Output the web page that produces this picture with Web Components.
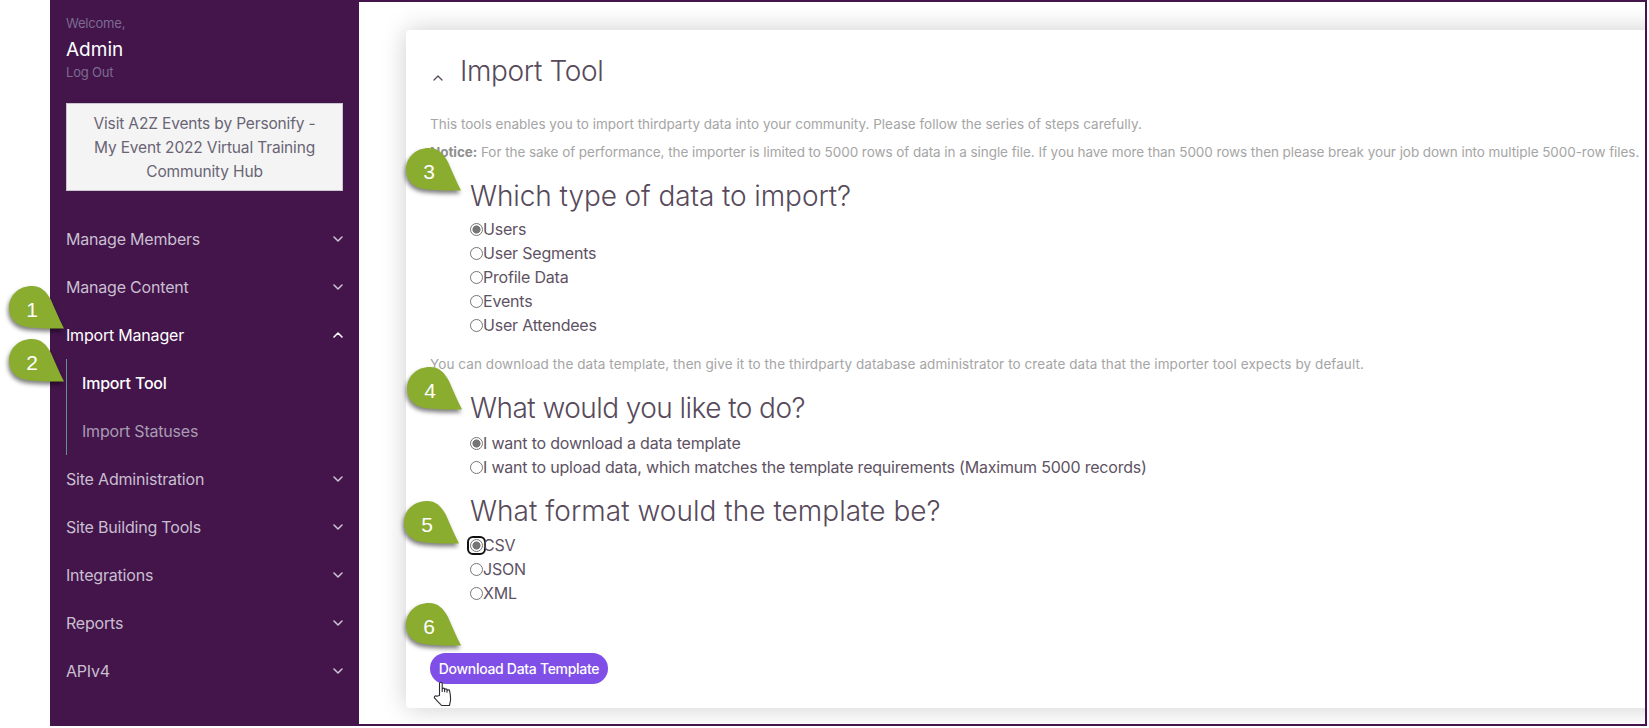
<!DOCTYPE html>
<html lang="en">
<head>
<meta charset="utf-8">
<title>Import Tool</title>
<style>
  html, body { margin: 0; background: #fff; }
  body { font-family: Inter, "Open Sans", sans-serif; position: relative; height: 728px; overflow: hidden; }
</style>
</head>
<body>
<admin-shell>
  <side-nav slot="nav">
    <nav-item label="Manage Members"></nav-item>
    <nav-item label="Manage Content"></nav-item>
    <nav-item label="Import Manager" open>
      <nav-sub active>Import Tool</nav-sub>
      <nav-sub>Import Statuses</nav-sub>
    </nav-item>
    <nav-item label="Site Administration"></nav-item>
    <nav-item label="Site Building Tools"></nav-item>
    <nav-item label="Integrations"></nav-item>
    <nav-item label="Reports"></nav-item>
    <nav-item label="APIv4"></nav-item>
  </side-nav>
  <import-tool slot="main"></import-tool>
</admin-shell>

<call-out n="1" x="8" y="286"></call-out>
<call-out n="2" x="8" y="339"></call-out>
<call-out n="3" x="405" y="148"></call-out>
<call-out n="4" x="406" y="367"></call-out>
<call-out n="5" x="403" y="501"></call-out>
<call-out n="6" x="405" y="603"></call-out>
<hand-cursor x="433" y="681"></hand-cursor>

<script>
const chevron = (up, weight = 1.6) => `<svg width="12" height="8" viewBox="0 0 12 8" fill="none" stroke="currentColor" stroke-width="${weight}" stroke-linecap="round" stroke-linejoin="round"><path d="${up ? 'M2 6l4-4 4 4' : 'M2 2l4 4 4-4'}"/></svg>`;

class AdminShell extends HTMLElement {
  constructor() {
    super();
    this.attachShadow({ mode: 'open' }).innerHTML = `
      <style>
        :host { display: flex; height: 726px; margin: 0 2px 0 50px; }
        .nav { flex: 0 0 309px; display: flex; }
        .main {
          flex: 1;
          min-width: 0;
          border: 2px solid #43154b;
          border-left: 0;
          overflow: hidden;
          padding: 28px 0 16px 47px;
          background: #fff;
        }
      </style>
      <div class="nav"><slot name="nav"></slot></div>
      <div class="main"><slot name="main"></slot></div>`;
  }
}

class SideNav extends HTMLElement {
  constructor() {
    super();
    this.attachShadow({ mode: 'open' }).innerHTML = `
      <style>
        :host { display: block; flex: 1; background: #43154b; padding: 13px 16px 0 16px; box-sizing: border-box; }
        .muted { font-size: 13px; line-height: 20px; color: #7d6b90; letter-spacing: -.2px; }
        .name { font-size: 19px; line-height: 24px; color: #fff; margin: 5px 0 0; font-weight: 400; letter-spacing: 0; }
        .hub {
          margin: 21px 0 24px;
          height: 88px;
          box-sizing: border-box;
          border: 1px solid #c9c6cc;
          background: #f4f4f4;
          color: #6a6474;
          font-size: 15.5px;
          line-height: 24px;
          text-align: center;
          padding: 8px 10px 0;
          letter-spacing: -.15px;
        }
      </style>
      <div class="muted">Welcome,</div>
      <div class="name">Admin</div>
      <div class="muted">Log Out</div>
      <div class="hub">Visit A2Z Events by Personify -<br>My Event 2022 Virtual Training<br>Community Hub</div>
      <slot></slot>`;
  }
}

class NavItem extends HTMLElement {
  connectedCallback() {
    if (this.shadowRoot) return;
    const open = this.hasAttribute('open');
    this.attachShadow({ mode: 'open' }).innerHTML = `
      <style>
        :host { display: block; }
        .row {
          height: 48px;
          display: flex;
          align-items: center;
          justify-content: space-between;
          font-size: 16px;
          font-weight: 400;
          letter-spacing: -.2px;
          color: ${open ? '#fff' : '#c9bfd0'};
        }
        svg { display: block; margin-right: -1px; }
        .sub { border-left: 1px solid #64908f; }
      </style>
      <div class="row"><span>${this.getAttribute('label')}</span>${chevron(open)}</div>
      ${open ? '<div class="sub"><slot></slot></div>' : ''}`;
  }
}

class NavSub extends HTMLElement {
  connectedCallback() {
    if (this.shadowRoot) return;
    const active = this.hasAttribute('active');
    this.attachShadow({ mode: 'open' }).innerHTML = `
      <style>
        :host {
          display: flex;
          align-items: center;
          height: 48px;
          padding-left: 15px;
          font-size: 16px;
          letter-spacing: -.2px;
          color: ${active ? '#fff' : '#a99bb3'};
          font-weight: ${active ? 500 : 400};
        }
      </style><slot></slot>`;
  }
}

class RadioOption extends HTMLElement {
  connectedCallback() {
    if (this.shadowRoot) return;
    const focused = this.hasAttribute('focused');
    this.attachShadow({ mode: 'open' }).innerHTML = `
      <style>
        :host { display: block; height: 24px; }
        label { display: flex; align-items: center; height: 24px; font-size: 16px; letter-spacing: -.2px; color: #5e5263; }
        input {
          appearance: none;
          width: 13px;
          height: 13px;
          margin: 0;
          box-sizing: border-box;
          border: 1px solid #767676;
          border-radius: 50%;
          background: #fff;
          flex: none;
        }
        input:checked { background: radial-gradient(circle, #767676 0 3.8px, #fff 4.3px); }
        .ring { outline: 2px solid #101010; outline-offset: 1px; display: flex; border-radius: 3px; }
      </style>
      <label>${focused ? '<span class="ring"><input type="radio" checked></span>' : `<input type="radio"${this.hasAttribute('checked') ? ' checked' : ''}>`}<span><slot></slot></span></label>`;
  }
}

class ImportTool extends HTMLElement {
  constructor() {
    super();
    this.attachShadow({ mode: 'open' }).innerHTML = `
      <style>
        :host {
          display: block;
          height: 678px;
          box-sizing: border-box;
          margin-right: -30px;
          background: #fff;
          border-radius: 4px;
          box-shadow: 0 0 26px rgba(0,0,0,.2);
          padding: 22px 0 0 24px;
          white-space: nowrap;
        }
        h1 {
          display: flex;
          align-items: center;
          margin: 0 0 22px;
          height: 38px;
          font-size: 28px;
          font-weight: 300;
          letter-spacing: -.35px;
          color: #574a5b;
          gap: 16px;
        }
        h1 svg { margin: 13px 0 0 2px; }
        p { margin: 0; font-size: 13.5px; line-height: 24px; color: #a5a5a5; }
        p b { font-weight: 700; color: #8f8f8f; }
        h2 {
          margin: 0 0 0 40px;
          height: 38px;
          line-height: 38px;
          font-size: 28px;
          font-weight: 300;
          color: #574a5b;
        }
        .group { margin-left: 40px; }
        button {
          display: block;
          margin: 48px 0 0;
          width: 178px;
          height: 31px;
          border: 0;
          padding: 0;
          border-radius: 16px;
          background: #7f4fe8;
          color: #fff;
          font: 500 14px Inter, sans-serif;
          letter-spacing: -.3px;
        }
      </style>
      <h1>${chevron(true, 1.3)}<span>Import Tool</span></h1>
      <p style="margin-bottom:4px">This tools enables you to import thirdparty data into your community. Please follow the series of steps carefully.</p>
      <p style="margin-bottom:13px;letter-spacing:-.06px"><b>Notice:</b> For the sake of performance, the importer is limited to 5000 rows of data in a single file. If you have more than 5000 rows then please break your job down into multiple 5000-row files.</p>
      <h2 style="letter-spacing:-.09px">Which type of data to import?</h2>
      <div class="group" style="margin-top:2px">
        <radio-option checked>Users</radio-option>
        <radio-option>User Segments</radio-option>
        <radio-option>Profile Data</radio-option>
        <radio-option>Events</radio-option>
        <radio-option>User Attendees</radio-option>
      </div>
      <p style="margin:15px 0 13px;letter-spacing:.08px">You can download the data template, then give it to the thirdparty database administrator to create data that the importer tool expects by default.</p>
      <h2 style="letter-spacing:-.55px">What would you like to do?</h2>
      <div class="group" style="margin-top:4px">
        <radio-option checked>I want to download a data template</radio-option>
        <radio-option>I want to upload data, which matches the template requirements (Maximum 5000 records)</radio-option>
      </div>
      <h2 style="margin-top:13px;letter-spacing:.03px">What format would the template be?</h2>
      <div class="group" style="margin-top:3px">
        <radio-option focused>CSV</radio-option>
        <radio-option>JSON</radio-option>
        <radio-option>XML</radio-option>
      </div>
      <button>Download Data Template</button>`;
  }
}

class CallOut extends HTMLElement {
  connectedCallback() {
    if (this.shadowRoot) return;
    this.attachShadow({ mode: 'open' }).innerHTML = `
      <style>
        :host {
          position: absolute;
          left: ${this.getAttribute('x')}px;
          top: ${this.getAttribute('y')}px;
          width: 56px;
          height: 43px;
        }
        svg { position: absolute; inset: 0; overflow: visible; filter: drop-shadow(-.5px 3px 2px rgba(0,0,0,.5)); }
        span {
          position: absolute;
          left: 0;
          top: 9px;
          width: 48px;
          text-align: center;
          font: 21px/30px "Liberation Sans", Arial, sans-serif;
          color: #fff;
        }
      </style>
      <svg width="56" height="43" viewBox="0 0 56 43"><path fill="#8aac2f" d="M56 42.5C44 42.5 30 42.5 22 41.5 8 40.5 1 32 1 22 1 9 11 0 24 0 33 0 38 5 43 14 47 23 51 33 56 42.5Z"/></svg>
      <span>${this.getAttribute('n')}</span>`;
  }
}

class HandCursor extends HTMLElement {
  connectedCallback() {
    if (this.shadowRoot) return;
    this.attachShadow({ mode: 'open' }).innerHTML = `
      <style>
        :host { position: absolute; left: ${this.getAttribute('x')}px; top: ${this.getAttribute('y')}px; width: 22px; height: 26px; }
        svg { display: block; }
      </style>
      <svg width="22" height="26" viewBox="0 0 22 26"><path fill="#fff" stroke="#2b2b33" stroke-width="1.1" stroke-linejoin="round" d="M6.5 14.5V2.6C6.5 .8 9.2 .8 9.2 2.6V10.5 8.2C9.2 6.8 11.6 6.8 11.6 8.2V10.8 8.8C11.6 7.5 14 7.5 14 8.8V11.2 9.8C14 8.6 16.6 8.6 16.6 9.8 17.2 12.5 17.6 15 17.6 18 17.6 20 17 22 16.4 24.5H8.6C6 21.5 3.6 19.5 1.6 17.2 .6 15.8 2.2 14.2 3.8 15.2Z"/></svg>`;
  }
}

customElements.define('admin-shell', AdminShell);
customElements.define('side-nav', SideNav);
customElements.define('nav-item', NavItem);
customElements.define('nav-sub', NavSub);
customElements.define('radio-option', RadioOption);
customElements.define('import-tool', ImportTool);
customElements.define('call-out', CallOut);
customElements.define('hand-cursor', HandCursor);
</script>
</body>
</html>
